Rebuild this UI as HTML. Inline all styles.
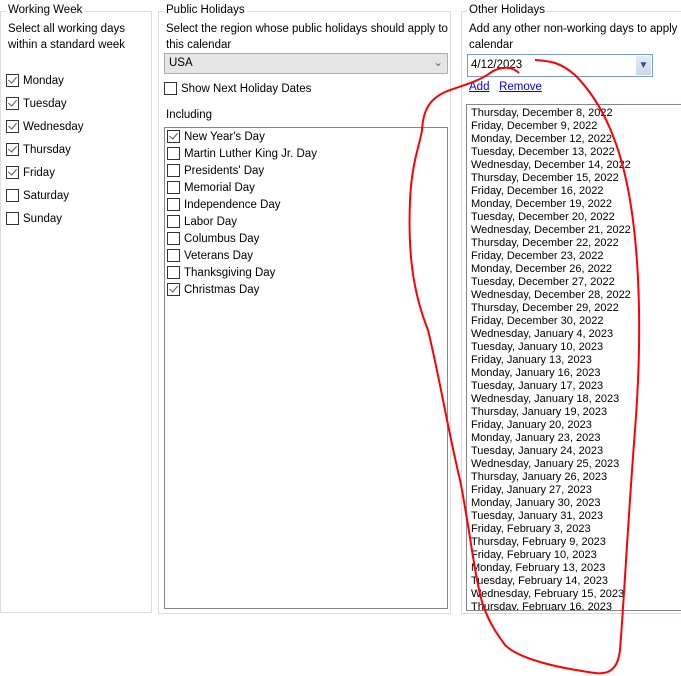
<!DOCTYPE html>
<html><head><style>
body{margin:0;width:681px;height:676px;background:#fff;font-family:"Liberation Sans",sans-serif;font-size:11.5px;color:#000;position:relative;overflow:hidden}
.g{position:absolute;border:1px solid #dcdcdc}
.t{position:absolute;background:#fff;padding:0 2px;top:-8px;left:5px;white-space:nowrap}
.a{position:absolute;white-space:nowrap;line-height:16px}
.cb{position:absolute;width:11px;height:11px;border:1px solid #333;background:#fff}
.cb.c::after{content:"";position:absolute;left:3px;top:0px;width:4px;height:7px;border:solid #555;border-width:0 1px 1px 0;transform:rotate(40deg)}
.lb{position:absolute;border:1px solid #828790;background:#fff;overflow:hidden}
.r{height:13px;line-height:13px;padding-left:4px;white-space:nowrap;font-size:11px}
a{color:#0000ee;text-decoration:underline}
</style></head><body>
<div class="g" style="left:0;top:11px;width:150px;height:600px"><span class="t">Working Week</span></div>
<div class="a" style="left:8px;top:21px">Select all working days<br>within a standard week</div>
<div class="cb c" style="left:6px;top:74px"></div><div class="a" style="left:23px;top:73px">Monday</div>
<div class="cb c" style="left:6px;top:97px"></div><div class="a" style="left:23px;top:96px">Tuesday</div>
<div class="cb c" style="left:6px;top:120px"></div><div class="a" style="left:23px;top:119px">Wednesday</div>
<div class="cb c" style="left:6px;top:143px"></div><div class="a" style="left:23px;top:142px">Thursday</div>
<div class="cb c" style="left:6px;top:166px"></div><div class="a" style="left:23px;top:165px">Friday</div>
<div class="cb" style="left:6px;top:189px"></div><div class="a" style="left:23px;top:188px">Saturday</div>
<div class="cb" style="left:6px;top:212px"></div><div class="a" style="left:23px;top:211px">Sunday</div>

<div class="g" style="left:158px;top:11px;width:291px;height:601px"><span class="t">Public Holidays</span></div>
<div class="a" style="left:166px;top:21px">Select the region whose public holidays should apply to<br>this calendar</div>
<div style="position:absolute;left:164px;top:53px;width:282px;height:19px;background:#e5e5e5;border:1px solid #adadad"><span style="position:absolute;left:4px;top:3px">USA</span><span style="position:absolute;right:4px;top:1px;color:#666">&#8964;</span></div>
<div class="cb" style="left:164px;top:82px"></div><div class="a" style="left:181px;top:81px">Show Next Holiday Dates</div>
<div class="a" style="left:166px;top:107px">Including</div>
<div class="lb" style="left:164px;top:127px;width:282px;height:480px"></div>
<div class="cb c" style="left:167px;top:130px"></div><div class="a" style="left:184px;top:129px">New Year's Day</div>
<div class="cb" style="left:167px;top:147px"></div><div class="a" style="left:184px;top:146px">Martin Luther King Jr. Day</div>
<div class="cb" style="left:167px;top:164px"></div><div class="a" style="left:184px;top:163px">Presidents' Day</div>
<div class="cb" style="left:167px;top:181px"></div><div class="a" style="left:184px;top:180px">Memorial Day</div>
<div class="cb" style="left:167px;top:198px"></div><div class="a" style="left:184px;top:197px">Independence Day</div>
<div class="cb" style="left:167px;top:215px"></div><div class="a" style="left:184px;top:214px">Labor Day</div>
<div class="cb" style="left:167px;top:232px"></div><div class="a" style="left:184px;top:231px">Columbus Day</div>
<div class="cb" style="left:167px;top:249px"></div><div class="a" style="left:184px;top:248px">Veterans Day</div>
<div class="cb" style="left:167px;top:266px"></div><div class="a" style="left:184px;top:265px">Thanksgiving Day</div>
<div class="cb c" style="left:167px;top:283px"></div><div class="a" style="left:184px;top:282px">Christmas Day</div>

<div class="g" style="left:461px;top:11px;width:230px;height:601px"><span class="t">Other Holidays</span></div>
<div class="a" style="left:469px;top:21px">Add any other non-working days to apply<br>calendar</div>
<div style="position:absolute;left:467px;top:54px;width:184px;height:21px;border:1px solid #7a9cc7;background:#fff"><span style="position:absolute;left:3px;top:4px">4/12/2023</span><span style="position:absolute;right:1px;top:1px;width:15px;height:19px;background:linear-gradient(#e4ecf8,#c7d7f0);color:#35507e;text-align:center;font-size:10px;line-height:19px">&#9660;</span></div>
<div class="a" style="left:469px;top:79px"><a>Add</a>&nbsp;&nbsp;&nbsp;<a>Remove</a></div>
<div class="lb" style="left:466px;top:104px;width:230px;height:503px;padding-top:2px">
<div class="r">Thursday, December 8, 2022</div><div class="r">Friday, December 9, 2022</div><div class="r">Monday, December 12, 2022</div><div class="r">Tuesday, December 13, 2022</div><div class="r">Wednesday, December 14, 2022</div><div class="r">Thursday, December 15, 2022</div><div class="r">Friday, December 16, 2022</div><div class="r">Monday, December 19, 2022</div><div class="r">Tuesday, December 20, 2022</div><div class="r">Wednesday, December 21, 2022</div><div class="r">Thursday, December 22, 2022</div><div class="r">Friday, December 23, 2022</div><div class="r">Monday, December 26, 2022</div><div class="r">Tuesday, December 27, 2022</div><div class="r">Wednesday, December 28, 2022</div><div class="r">Thursday, December 29, 2022</div><div class="r">Friday, December 30, 2022</div><div class="r">Wednesday, January 4, 2023</div><div class="r">Tuesday, January 10, 2023</div><div class="r">Friday, January 13, 2023</div><div class="r">Monday, January 16, 2023</div><div class="r">Tuesday, January 17, 2023</div><div class="r">Wednesday, January 18, 2023</div><div class="r">Thursday, January 19, 2023</div><div class="r">Friday, January 20, 2023</div><div class="r">Monday, January 23, 2023</div><div class="r">Tuesday, January 24, 2023</div><div class="r">Wednesday, January 25, 2023</div><div class="r">Thursday, January 26, 2023</div><div class="r">Friday, January 27, 2023</div><div class="r">Monday, January 30, 2023</div><div class="r">Tuesday, January 31, 2023</div><div class="r">Friday, February 3, 2023</div><div class="r">Thursday, February 9, 2023</div><div class="r">Friday, February 10, 2023</div><div class="r">Monday, February 13, 2023</div><div class="r">Tuesday, February 14, 2023</div><div class="r">Wednesday, February 15, 2023</div><div class="r">Thursday, February 16, 2023</div>
</div>
<svg style="position:absolute;left:0;top:0" width="681" height="676"><path d="M519 73 C512 66 500 66 490 73 C478 82 460 86 445 92 C428 100 423 112 422 130 C420 145 412 160 410 200 C408 250 412 290 428 330 C440 380 448 430 460 480 C470 530 475 580 483 605 C490 625 498 635 505 645 C520 660 560 668 595 673 C610 675 618 668 620 650 C624 600 628 520 635 430 C642 340 640 260 630 200 C620 140 600 100 575 75 C560 62 550 61 535 60" fill="none" stroke="#f00" stroke-width="2"/></svg>
</body></html>
